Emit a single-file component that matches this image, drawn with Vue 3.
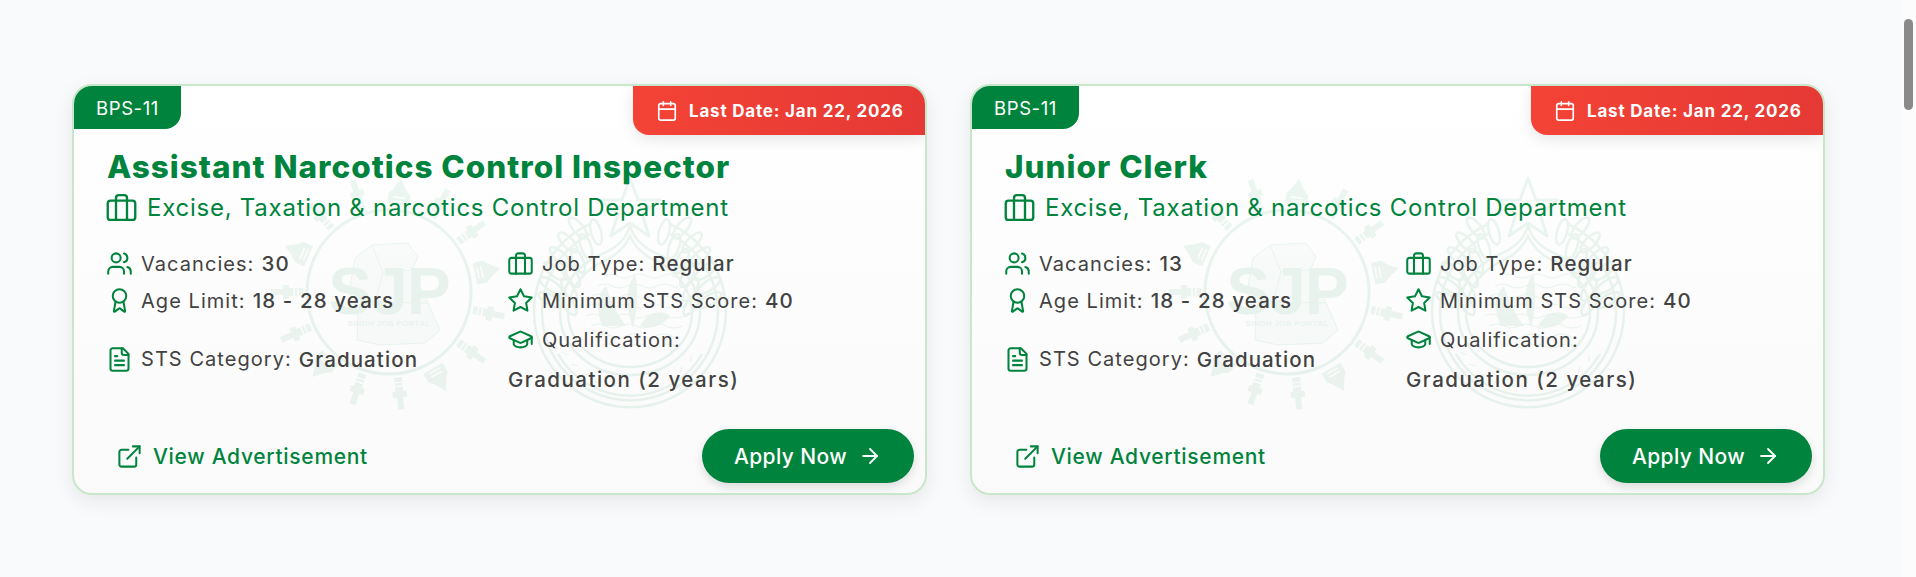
<script setup>
const icons = {
  brief: ['M16 21V5a2 2 0 0 0-2-2h-4a2 2 0 0 0-2 2v16', 'M4 7h16a2 2 0 0 1 2 2v10a2 2 0 0 1-2 2H4a2 2 0 0 1-2-2V9a2 2 0 0 1 2-2z'],
  users: ['M16 21v-2a4 4 0 0 0-4-4H6a4 4 0 0 0-4 4v2', 'M9 3a4 4 0 1 1 0 8 4 4 0 0 1 0-8z', 'M22 21v-2a4 4 0 0 0-3-3.87', 'M16 3.13a4 4 0 0 1 0 7.75'],
  award: ['M15.477 12.89l1.515 8.526a.5.5 0 0 1-.81.47l-3.58-2.687a1 1 0 0 0-1.197 0l-3.586 2.686a.5.5 0 0 1-.81-.469l1.514-8.526', 'M12 2a6 6 0 1 1 0 12 6 6 0 0 1 0-12z'],
  file: ['M15 2H6a2 2 0 0 0-2 2v16a2 2 0 0 0 2 2h12a2 2 0 0 0 2-2V7z', 'M14 2v4a2 2 0 0 0 2 2h4', 'M10 9H8', 'M16 13H8', 'M16 17H8'],
  star: ['M12 2l3.09 6.26L22 9.27l-5 4.87 1.18 6.88L12 17.77l-6.18 3.25L7 14.14 2 9.27l6.91-1.01L12 2z'],
  cap: ['M21.42 10.922a1 1 0 0 0-.019-1.838L12.83 5.18a2 2 0 0 0-1.66 0L2.6 9.08a1 1 0 0 0 0 1.832l8.57 3.908a2 2 0 0 0 1.66 0z', 'M22 10v6', 'M6 12.5V16a6 3 0 0 0 12 0v-3.5'],
  link: ['M15 3h6v6', 'M10 14L21 3', 'M18 13v6a2 2 0 0 1-2 2H5a2 2 0 0 1-2-2V8a2 2 0 0 1 2-2h6'],
  arrow: ['M5 12h14', 'M12 5l7 7-7 7'],
  cal: ['M8 2v4', 'M16 2v4', 'M5 4h14a2 2 0 0 1 2 2v14a2 2 0 0 1-2 2H5a2 2 0 0 1-2-2V6a2 2 0 0 1 2-2z', 'M3 10h18'],
}

const jobs = [
  { title: 'Assistant Narcotics Control Inspector', vacancies: 30 },
  { title: 'Junior Clerk', vacancies: 13 },
]

const ringItems = Array.from({ length: 15 }, (_, i) => ({
  angle: i * 24 + 6,
  wide: i % 3 === 0,
}))

const leaves = []
for (const side of [-1, 1]) {
  for (let i = 0; i < 6; i++) {
    const t = i / 5
    const x = side * (72 - 28 * t * t)
    const y = -8 - 72 * t
    leaves.push({ x: x - side * 10, y, rot: side * (35 - 20 * t) })
    leaves.push({ x: x + side * 8, y: y - 4, rot: side * (60 - 20 * t) })
  }
}
const waves = [-36, -26, -16, -6, 4, 14, 24, 34]
const scriptArcs = Array.from({ length: 11 }, (_, i) => 35 + i * 11)
const rad = (d) => (d * Math.PI) / 180
</script>

<template>
  <div class="page">
    <main class="content">
      <article v-for="job in jobs" :key="job.title" class="card">
        <svg class="watermark" viewBox="0 0 851 407" aria-hidden="true">
          <g transform="translate(315 206)" class="wm">
            <circle r="82" class="ring" />
            <path class="map" d="M-34-34-17-47 19-49 29-35 23-22 39 11 51 38 36 51-9 53-32 48-31 25-40 0z" />
            <path class="thin" d="M-17-47-6-20 23-22M-6-20-14 10M-40 0-14 10 39 11" />
            <g v-for="it in ringItems" :key="it.angle" :transform="`rotate(${it.angle}) translate(0 -101)`">
              <path v-if="it.wide" class="solid" d="M-11 13V3L-6-3 0-13 6-3 11 3V13z" />
              <path v-else class="solid" d="M-4 15V1H-7V-5H-3V-17H3V-5H7V1H4V15z" />
              <path class="cut" d="M-6 6H6M-6 10H6" />
            </g>
            <text class="sjp" text-anchor="middle" y="22">SJP</text>
            <text class="sjp-sub" text-anchor="middle" y="34">SINDH JOB PORTAL</text>
          </g>
          <g transform="translate(556 226)" class="wm">
            <path class="band" d="M-40-88A96 96 0 1 0 40-88" />
            <path class="band" d="M-40-78A88 88 0 1 0 40-78" />
            <path class="band" d="M-72 42A83 83 0 0 0 72 42" />
            <path class="star" d="M0-134 8-112 30-112 12-98 19-76 0-89-19-76-12-98-30-112-8-112z" />
            <path class="band" d="M0-87C4-70 18-62 32-56 54-46 70-24 70 0 70 36 38 63 0 63-38 63-70 36-70 0-70-24-54-46-32-56-18-62-4-70 0-87z" />
            <path class="band" d="M0-76C6-62 18-54 30-49 48-40 62-20 62 0 62 32 33 55 0 55-33 55-62 32-62 0-62-20-48-40-30-49-18-54-6-62 0-76z" />
            <ellipse v-for="(l, i) in leaves" :key="i" class="leaf" rx="5" ry="13" :cx="l.x" :cy="l.y" :transform="`rotate(${l.rot} ${l.x} ${l.y})`" />
            <path v-for="y in waves" :key="y" class="thin" :d="`M${-46 + Math.abs(y) / 2} ${y}q8-4 15 0t15 0 15 0 15 0 15 0 ${31 - Math.abs(y)} 0`" />
            <path class="solid" d="M-27 14C-36-4-32-18-24-26-20-12-13 2-4 14zM5-38C9-20 7 0 3 16-4-6-5-24 5-38zM10 14C18 0 31-3 40 4 32 14 22 18 10 14z" />
            <path v-for="a in scriptArcs" :key="a" class="thin" :d="`M${Math.cos(rad(a)) * 75} ${Math.sin(rad(a)) * 75}l${Math.cos(rad(a + 60)) * 7} ${Math.sin(rad(a + 60)) * 7}`" />
          </g>
        </svg>

        <div class="grade">BPS-11</div>
        <div class="deadline">
          <svg class="ico ico-date" viewBox="0 0 24 24"><path v-for="d in icons.cal" :key="d" :d="d" /></svg>
          <span>Last Date: Jan 22, 2026</span>
        </div>

        <header class="head">
          <h2 class="title">{{ job.title }}</h2>
          <p class="dept">
            <svg class="ico ico-dept" viewBox="0 0 24 24"><path v-for="d in icons.brief" :key="d" :d="d" /></svg>
            <span>Excise, Taxation &amp; narcotics Control Department</span>
          </p>
        </header>

        <section class="facts">
          <div class="fact">
            <svg class="ico" viewBox="0 0 24 24"><path v-for="d in icons.users" :key="d" :d="d" /></svg>
            <span class="label">Vacancies:</span><b class="value">{{ job.vacancies }}</b>
          </div>
          <div class="fact">
            <svg class="ico" viewBox="0 0 24 24"><path v-for="d in icons.brief" :key="d" :d="d" /></svg>
            <span class="label">Job Type:</span><b class="value">Regular</b>
          </div>
          <div class="fact">
            <svg class="ico" viewBox="0 0 24 24"><path v-for="d in icons.award" :key="d" :d="d" /></svg>
            <span class="label">Age Limit:</span><b class="value">18 - 28 years</b>
          </div>
          <div class="fact">
            <svg class="ico" viewBox="0 0 24 24"><path v-for="d in icons.star" :key="d" :d="d" /></svg>
            <span class="label">Minimum STS Score:</span><b class="value">40</b>
          </div>
          <div class="fact">
            <svg class="ico" viewBox="0 0 24 24"><path v-for="d in icons.file" :key="d" :d="d" /></svg>
            <span class="label">STS Category:</span><b class="value">Graduation</b>
          </div>
          <div class="fact fact-wrap">
            <svg class="ico" viewBox="0 0 24 24"><path v-for="d in icons.cap" :key="d" :d="d" /></svg>
            <span class="label">Qualification:</span><b class="value value-line">Graduation (2 years)</b>
          </div>
        </section>

        <footer class="actions">
          <a class="advert">
            <svg class="ico" viewBox="0 0 24 24"><path v-for="d in icons.link" :key="d" :d="d" /></svg>
            <span>View Advertisement</span>
          </a>
          <button class="apply" type="button">
            <span>Apply Now</span>
            <svg class="ico ico-arrow" viewBox="0 0 24 24"><path v-for="d in icons.arrow" :key="d" :d="d" /></svg>
          </button>
        </footer>
      </article>
    </main>
    <aside class="scrollbar"><div class="thumb"></div></aside>
  </div>
</template>

<style scoped>
.page {
  display: flex;
  height: 577px;
  overflow: hidden;
  background: #f9fafc;
  font-family: Inter, "Noto Sans", sans-serif;
  color: #424242;
}
.content {
  flex: 1;
  display: grid;
  grid-template-columns: 855px 855px;
  column-gap: 43px;
  align-items: start;
  padding: 84px 0 0 72px;
}
.card {
  position: relative;
  height: 411px;
  box-sizing: border-box;
  border: 2px solid #c8e6c9;
  border-radius: 20px;
  overflow: hidden;
  background: linear-gradient(180deg, #ffffff 0%, #fafafa 100%);
  box-shadow: 0 6px 20px rgba(0, 0, 0, 0.08);
}
.watermark {
  position: absolute;
  inset: 0;
  width: 851px;
  height: 407px;
}
.wm { opacity: 0.075; }
.ring { fill: none; stroke: #00843d; stroke-width: 3; }
.map { fill: #00843d; fill-opacity: 0.25; stroke: #00843d; stroke-width: 1; }
.thin { fill: none; stroke: #00843d; stroke-width: 1; }
.solid { fill: #00843d; fill-opacity: 0.9; }
.cut { fill: none; stroke: #fff; stroke-width: 1.5; }
.band { fill: none; stroke: #00843d; stroke-width: 2.5; }
.star { fill: none; stroke: #00843d; stroke-width: 3; stroke-linejoin: round; }
.leaf { fill: none; stroke: #00843d; stroke-width: 2.5; }
.sjp {
  font-family: "Liberation Sans", sans-serif;
  font-weight: 700;
  font-size: 66px;
  letter-spacing: -1px;
  fill: #00843d;
}
.sjp-sub {
  font-family: "Liberation Sans", sans-serif;
  font-weight: 700;
  font-size: 8px;
  letter-spacing: 0.3px;
  fill: #00843d;
}
.grade {
  position: absolute;
  top: 0;
  left: 0;
  width: 107px;
  height: 43px;
  display: flex;
  align-items: center;
  justify-content: center;
  background: #00843d;
  color: #fff;
  font-size: 18.5px;
  letter-spacing: 0.6px;
  border-bottom-right-radius: 16px;
}
.deadline {
  position: absolute;
  top: 0;
  right: 0;
  width: 292px;
  height: 49px;
  box-sizing: border-box;
  padding-left: 23px;
  display: flex;
  align-items: center;
  gap: 11px;
  color: #fff;
  font-size: 17px;
  letter-spacing: 0.8px;
  font-weight: 700;
  background: linear-gradient(90deg, #f44336, #e53935);
  border-bottom-left-radius: 16px;
  box-shadow: 0 4px 15px rgba(0, 0, 0, 0.1);
}
.ico {
  flex: none;
  width: 27px;
  height: 27px;
  fill: none;
  stroke: #00843d;
  stroke-width: 1.8;
  stroke-linecap: round;
  stroke-linejoin: round;
}
.ico-date { width: 22px; height: 22px; stroke: #fff; }
.ico-dept { width: 33px; height: 33px; margin-left: -2px; stroke-width: 1.7; }
.ico-arrow { width: 24px; height: 24px; stroke: #fff; }
.head {
  position: relative;
  padding: 59px 33px 0;
}
.title {
  margin: 0;
  height: 43px;
  line-height: 43px;
  font-size: 31.5px;
  letter-spacing: 1px;
  font-weight: 800;
  color: #00843d;
  white-space: nowrap;
}
.dept {
  margin: 0;
  height: 38px;
  display: flex;
  align-items: center;
  gap: 9px;
  font-size: 24px;
  letter-spacing: 0.75px;
  color: #00843d;
  white-space: nowrap;
}
.facts {
  position: relative;
  display: grid;
  grid-template-columns: 401px 1fr;
  grid-template-rows: 37px 37px 80px;
  align-items: center;
  padding: 19px 33px 0 32px;
}
.fact {
  display: flex;
  align-items: center;
  font-size: 20px;
  letter-spacing: 1.05px;
  white-space: nowrap;
}
.fact-wrap {
  flex-wrap: wrap;
  row-gap: 14px;
}
.label { margin-left: 8px; }
.value { margin-left: 7px; font-size: 20.5px; letter-spacing: 1.1px; font-weight: 500; }
.value-line { margin-left: 1px; flex-basis: 100%; letter-spacing: 1.5px; }
.actions {
  position: absolute;
  left: 0;
  right: 0;
  bottom: 0;
  display: flex;
  align-items: center;
  justify-content: space-between;
  padding: 0 11px 10px 42px;
}
.advert {
  display: flex;
  align-items: center;
  gap: 10px;
  font-size: 21px;
  letter-spacing: 0.7px;
  font-weight: 500;
  color: #00843d;
}
.apply {
  width: 212px;
  height: 54px;
  border: 0;
  border-radius: 27px;
  background: #00843d;
  color: #fff;
  display: flex;
  align-items: center;
  justify-content: center;
  gap: 11px;
  font-family: inherit;
  font-size: 21px;
  letter-spacing: 0.4px;
  font-weight: 500;
  box-shadow: 0 4px 10px rgba(0, 0, 0, 0.12);
}
.scrollbar {
  flex: none;
  width: 15px;
  background: #fcfcfd;
  padding: 19px 3px 0;
  box-sizing: border-box;
}
.thumb {
  width: 9px;
  height: 91px;
  border-radius: 5px;
  background: #8a8a8a;
}
</style>
